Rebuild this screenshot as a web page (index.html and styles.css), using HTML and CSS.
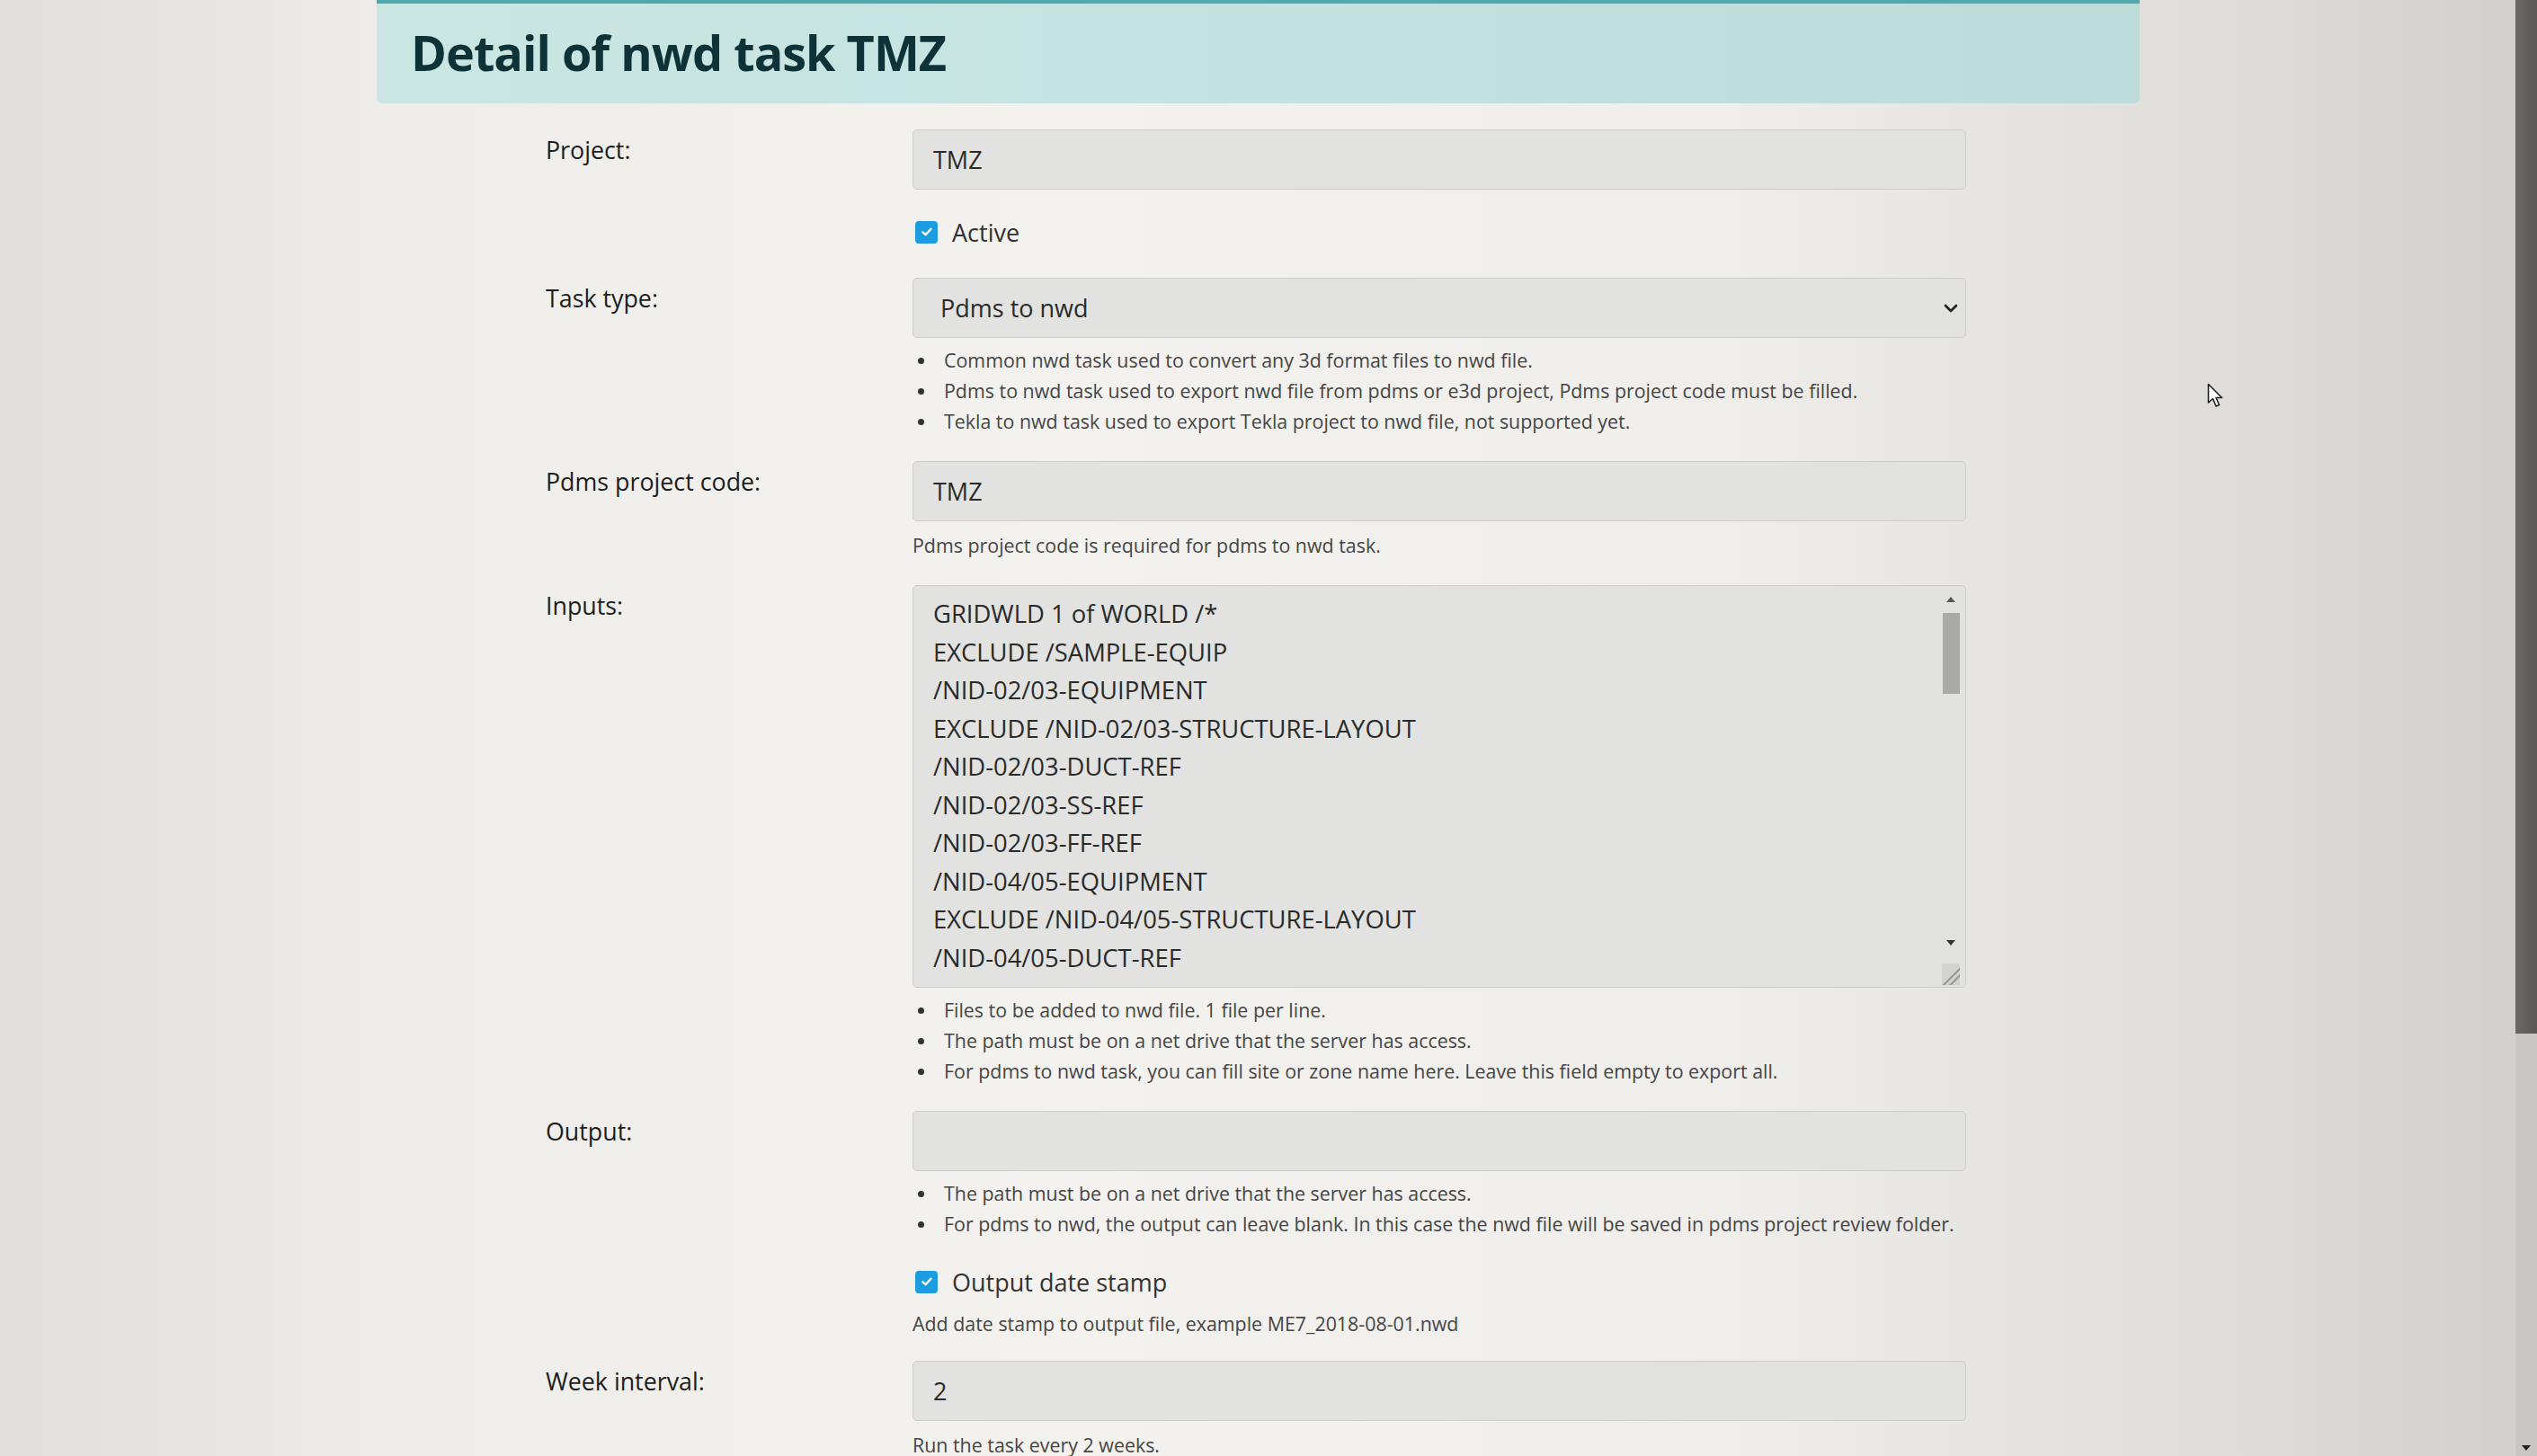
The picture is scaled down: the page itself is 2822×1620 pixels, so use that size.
FILE: index.html
```html
<!DOCTYPE html>
<html lang="en">
<head>
<meta charset="utf-8">
<title>Detail of nwd task TMZ</title>
<link rel="stylesheet" href="styles.css">
</head>
<body>
<div class="page">
  <header class="banner"><h1 class="title">Detail of nwd task TMZ</h1></header>
  <form class="form">
    <div class="group">
      <div class="lbl">Project:</div>
      <div class="field"><div class="input">TMZ</div></div>
    </div>
    <div class="group group-check">
      <div class="lbl"></div>
      <div class="field">
        <div class="check"><span class="box"><svg viewBox="0 0 16 16" width="16" height="16"><path d="M3.5 8.3 L6.6 11.2 L12.5 4.8" fill="none" stroke="#fff" stroke-width="2.4" stroke-linecap="round" stroke-linejoin="round"/></svg></span><span>Active</span></div>
      </div>
    </div>
    <div class="group">
      <div class="lbl">Task type:</div>
      <div class="field">
        <div class="input select"><span>Pdms to nwd</span><svg class="chev" viewBox="0 0 16 10" width="16" height="10"><path d="M2 2 L8 8 L14 2" fill="none" stroke="#222" stroke-width="2.8" stroke-linecap="round" stroke-linejoin="round"/></svg></div>
        <ul class="hints">
          <li>Common nwd task used to convert any 3d format files to nwd file.</li>
          <li>Pdms to nwd task used to export nwd file from pdms or e3d project, Pdms project code must be filled.</li>
          <li>Tekla to nwd task used to export Tekla project to nwd file, not supported yet.</li>
        </ul>
      </div>
    </div>
    <div class="group">
      <div class="lbl">Pdms project code:</div>
      <div class="field">
        <div class="input">TMZ</div>
        <p class="help">Pdms project code is required for pdms to nwd task.</p>
      </div>
    </div>
    <div class="group">
      <div class="lbl">Inputs:</div>
      <div class="field">
        <div class="textarea">
          <div class="lines">
            <div>GRIDWLD 1 of WORLD /*</div>
            <div>EXCLUDE /SAMPLE-EQUIP</div>
            <div>/NID-02/03-EQUIPMENT</div>
            <div>EXCLUDE /NID-02/03-STRUCTURE-LAYOUT</div>
            <div>/NID-02/03-DUCT-REF</div>
            <div>/NID-02/03-SS-REF</div>
            <div>/NID-02/03-FF-REF</div>
            <div>/NID-04/05-EQUIPMENT</div>
            <div>EXCLUDE /NID-04/05-STRUCTURE-LAYOUT</div>
            <div>/NID-04/05-DUCT-REF</div>
          </div>
          <div class="tscroll">
            <span class="arr up"></span>
            <span class="tthumb"></span>
            <span class="tspace"></span>
            <span class="arr down"></span>
            <span class="grip"></span>
          </div>
        </div>
        <ul class="hints">
          <li>Files to be added to nwd file. 1 file per line.</li>
          <li>The path must be on a net drive that the server has access.</li>
          <li>For pdms to nwd task, you can fill site or zone name here. Leave this field empty to export all.</li>
        </ul>
      </div>
    </div>
    <div class="group">
      <div class="lbl">Output:</div>
      <div class="field">
        <div class="input"></div>
        <ul class="hints">
          <li>The path must be on a net drive that the server has access.</li>
          <li>For pdms to nwd, the output can leave blank. In this case the nwd file will be saved in pdms project review folder.</li>
        </ul>
      </div>
    </div>
    <div class="group group-stamp">
      <div class="lbl"></div>
      <div class="field">
        <div class="check"><span class="box"><svg viewBox="0 0 16 16" width="16" height="16"><path d="M3.5 8.3 L6.6 11.2 L12.5 4.8" fill="none" stroke="#fff" stroke-width="2.4" stroke-linecap="round" stroke-linejoin="round"/></svg></span><span>Output date stamp</span></div>
        <p class="help">Add date stamp to output file, example ME7_2018-08-01.nwd</p>
      </div>
    </div>
    <div class="group">
      <div class="lbl">Week interval:</div>
      <div class="field">
        <div class="input">2</div>
        <p class="help">Run the task every 2 weeks.</p>
      </div>
    </div>
  </form>
</div>
<svg class="cursor" viewBox="0 0 20 30" width="20" height="30"><path d="M1.5 1.5 L1.5 22 L6.5 17.5 L10 26 L13.5 24.5 L10 16.5 L16.5 16.5 Z" fill="#fff" stroke="#222" stroke-width="1.6" stroke-linejoin="round"/></svg>
<div class="vscroll"><span class="vthumb"></span><span class="varr"></span></div>
</body>
</html>
```

FILE: styles.css
```css
html, body {
  margin: 0;
  padding: 0;
  height: 100%;
  overflow: hidden;
}
body {
  font-family: "Open Sans", "Noto Sans", sans-serif;
  color: #222;
  background:
    linear-gradient(to right, #e1dfdc 0%, #eeede9 16%, #f3f2ef 42%, #efeeeb 68%, #dddbd8 90%, #d1cfcc 100%);
}
.page {
  margin-left: 419px;
  width: 1961px;
}
.banner {
  height: 111px;
  border-top: 4px solid #4fa9ad;
  background: linear-gradient(to right, #cae6e3, #c3e2df 60%, #bddcd9);
  border-radius: 0 0 6px 6px;
  display: flex;
  align-items: center;
  padding-left: 38px;
}
.title {
  margin: 0;
  font-size: 54px;
  font-weight: 700;
  color: #0d3338;
  letter-spacing: -1px;
  transform: translateY(-2px);
}
.form {
  padding-left: 188px;
  padding-top: 29px;
}
.group {
  display: grid;
  grid-template-columns: 408px 1172px;
  margin-bottom: 27px;
}
.group-check {
  margin-top: 2px;
  margin-bottom: 31px;
}
.group-stamp {
  margin-bottom: 24px;
}
.lbl {
  font-size: 26.8px;
  line-height: 40px;
  padding-top: 3px;
  color: #1d1d1d;
}
.field {
  display: flex;
  flex-direction: column;
}
.input {
  height: 67px;
  box-sizing: border-box;
  background: #e2e2e0;
  border: 1px solid #cdcdcb;
  border-radius: 5px;
  font-size: 27px;
  color: #2a2a2a;
  padding: 0 22px;
  display: flex;
  align-items: center;
}
.select {
  justify-content: space-between;
  padding-left: 30px;
  padding-right: 8px;
}
.chev {
  display: block;
}
.check {
  display: flex;
  align-items: center;
  height: 40px;
  font-size: 27px;
  color: #333;
  gap: 16px;
  padding-left: 3px;
}
.box {
  width: 25px;
  height: 25px;
  border-radius: 4px;
  background: #1d9de0;
  display: flex;
  align-items: center;
  justify-content: center;
}
.hints {
  margin: 8px 0 0;
  padding: 0 0 0 6px;
  list-style: none;
  font-size: 21.4px;
  line-height: 34px;
  color: #454545;
}
.hints li {
  display: flex;
  align-items: center;
}
.hints li::before {
  content: "";
  flex: none;
  width: 7px;
  height: 7px;
  border-radius: 50%;
  background: #333;
  margin-right: 22px;
}
.help {
  margin: 10px 0 0;
  font-size: 21.4px;
  line-height: 34px;
  color: #454545;
}
.textarea {
  height: 448px;
  box-sizing: border-box;
  background: #e2e2e0;
  border: 1px solid #cdcdcb;
  border-radius: 5px;
  display: flex;
  overflow: hidden;
}
.lines {
  flex: 1;
  padding: 10px 0 0 22px;
  font-size: 27.4px;
  line-height: 42.5px;
  color: #2a2a2a;
}
.tscroll {
  width: 24px;
  margin-right: 4px;
  display: flex;
  flex-direction: column;
  align-items: center;
  padding-top: 12px;
}
.arr {
  width: 0;
  height: 0;
  border-left: 5px solid transparent;
  border-right: 5px solid transparent;
}
.arr.up {
  border-bottom: 6px solid #555;
}
.arr.down {
  border-top: 6px solid #333;
}
.tthumb {
  margin-top: 12px;
  width: 19px;
  height: 90px;
  background: #a9a9a7;
}
.tspace {
  flex: 1;
}
.grip {
  margin-top: 20px;
  width: 20px;
  height: 24px;
  background: linear-gradient(135deg, transparent 55%, #9a9a98 56%, #9a9a98 62%, transparent 63%, transparent 72%, #9a9a98 73%, #9a9a98 79%, transparent 80%), #d2d2d0;
  margin-bottom: 2px;
}
.cursor {
  position: absolute;
  left: 2455px;
  top: 426px;
}
.vscroll {
  position: fixed;
  right: 0;
  top: 0;
  width: 24px;
  height: 100%;
  background: #c9c7c4;
  display: flex;
  flex-direction: column;
  justify-content: space-between;
  align-items: center;
}
.vthumb {
  width: 24px;
  height: 1150px;
  background: linear-gradient(to right, #6b6967, #5a5856);
}
.varr {
  width: 0;
  height: 0;
  border-left: 5px solid transparent;
  border-right: 5px solid transparent;
  border-top: 6px solid #222;
  margin-bottom: 6px;
}
```
